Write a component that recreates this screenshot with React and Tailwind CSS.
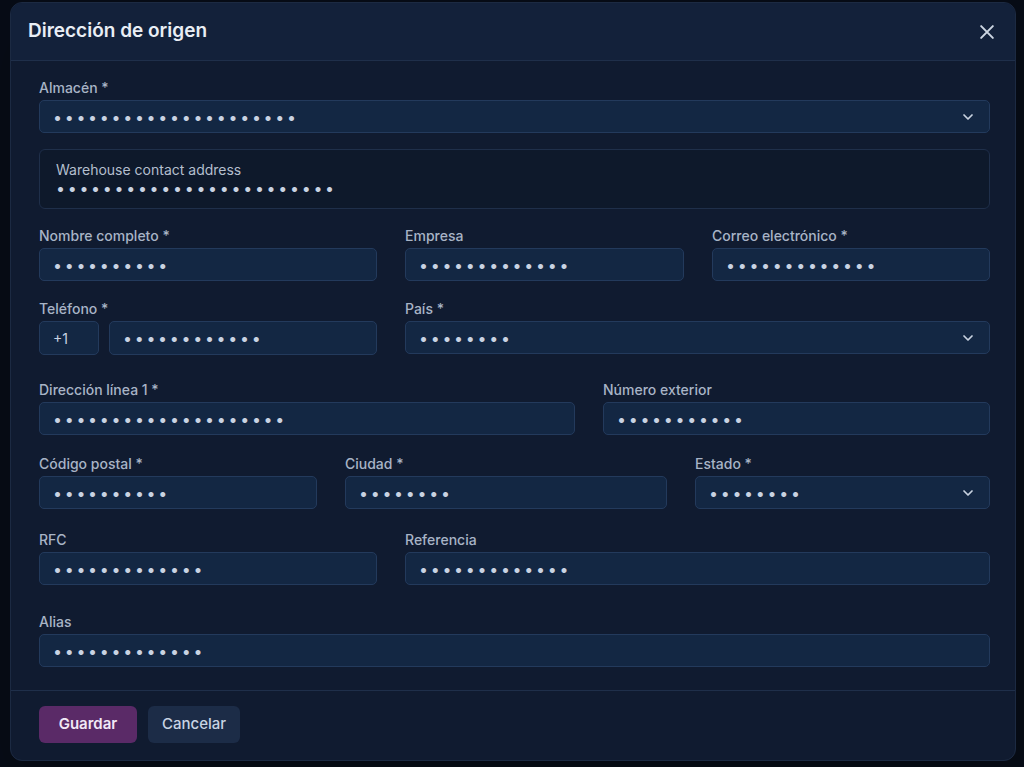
import React from "react";

const Dots = ({ n }) => (
  <span className="tracking-[2.7px] text-[16px] text-[#c9d3e2] leading-4">
    {"•".repeat(n)}
  </span>
);

const Label = ({ children }) => (
  <div className="text-[14px] leading-4 font-medium text-[#a8b4c6] mb-1">
    {children}
  </div>
);

const Chevron = () => (
  <svg width="16" height="16" viewBox="0 0 24 24" fill="none" stroke="#c8d2e0" strokeWidth="2.6" strokeLinecap="round" strokeLinejoin="round">
    <path d="M6 9l6 6 6-6" />
  </svg>
);

const Input = ({ dots, select, className = "" }) => (
  <div
    className={`h-[33px] rounded-[5px] border border-[#233a5c] bg-[#132743] flex items-center justify-between pl-[13px] pr-[13px] ${className}`}
  >
    <Dots n={dots} />
    {select && <Chevron />}
  </div>
);

const Field = ({ label, dots, select }) => (
  <div className="min-w-0">
    <Label>{label}</Label>
    <Input dots={dots} select={select} />
  </div>
);

const App = () => {
  return (
    <div
      className="w-[1024px] h-[767px] bg-[#070c16] pt-[2px] pl-[10px] overflow-hidden"
      style={{ fontFamily: "Inter, 'Liberation Sans', sans-serif" }}
    >
      <div className="w-[1006px] rounded-[12px] bg-[#101b30] border border-[#1c2a42] overflow-hidden shadow-2xl">
        <div className="h-[58px] bg-[#13213a] border-b border-[#1f2f4a] flex items-center justify-between pl-[17px] pr-[18px]">
          <h2 className="text-[19px] font-semibold text-[#e9eef5]">
            Dirección de origen
          </h2>
          <svg width="20" height="20" viewBox="0 0 24 24" fill="none" stroke="#cdd6e2" strokeWidth="2.4" strokeLinecap="round">
            <path d="M5 5l14 14M19 5L5 19" />
          </svg>
        </div>

        <div className="pl-[28px] pr-[25px] pt-[19px] pb-[23px]">
          <Field label="Almacén *" dots={21} select />

          <div className="mt-4 h-[60px] rounded-[6px] border border-[#1f2f4a] bg-[#0e192b] px-4 pt-[12px]">
            <div className="text-[14px] leading-4 text-[#b4bfce]">
              Warehouse contact address
            </div>
            <div className="mt-[2px] h-4 flex items-center">
              <Dots n={24} />
            </div>
          </div>

          <div className="mt-[19px] grid grid-cols-[338px_279px_1fr] gap-x-[28px]">
            <Field label="Nombre completo *" dots={10} />
            <Field label="Empresa" dots={13} />
            <Field label="Correo electrónico *" dots={13} />
          </div>

          <div className="mt-[20px] grid grid-cols-[338px_1fr] gap-x-[28px]">
            <div>
              <Label>Teléfono *</Label>
              <div className="flex gap-[10px]">
                <div className="w-[60px] h-[34px] rounded-[5px] border border-[#233a5c] bg-[#132743] flex items-center pl-[13px] text-[14px] text-[#c9d3e2]">
                  +1
                </div>
                <Input dots={12} className="flex-1 h-[34px]" />
              </div>
            </div>
            <Field label="País *" dots={8} select />
          </div>

          <div className="mt-[27px] grid grid-cols-[536px_1fr] gap-x-[28px]">
            <Field label="Dirección línea 1 *" dots={20} />
            <Field label="Número exterior" dots={11} />
          </div>

          <div className="mt-[21px] grid grid-cols-[278px_322px_1fr] gap-x-[28px]">
            <Field label="Código postal *" dots={10} />
            <Field label="Ciudad *" dots={8} />
            <Field label="Estado *" dots={8} select />
          </div>

          <div className="mt-[23px] grid grid-cols-[338px_1fr] gap-x-[28px]">
            <Field label="RFC" dots={13} />
            <Field label="Referencia" dots={13} />
          </div>

          <div className="mt-[29px]">
            <Field label="Alias" dots={13} />
          </div>
        </div>

        <div className="border-t border-[#1f2f4a] pl-[28px] pt-[15px] pb-[17px] flex gap-[11px]">
          <button className="h-[37px] w-[98px] rounded-[6px] bg-[#5a2a67] text-[15px] font-semibold text-[#f1e8f6]">
            Guardar
          </button>
          <button className="h-[37px] w-[92px] rounded-[6px] bg-[#1c2c47] text-[15px] font-medium text-[#c9d4e3]">
            Cancelar
          </button>
        </div>
      </div>
    </div>
  );
};

export default App;
